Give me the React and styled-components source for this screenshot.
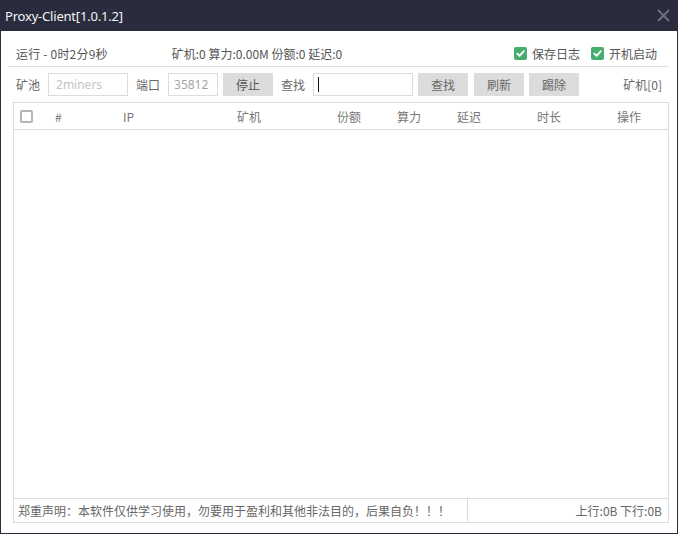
import React from "react";
import styled, { createGlobalStyle } from "styled-components";

const Global = createGlobalStyle`
  html, body { margin: 0; padding: 0; background: #fff; }
  body { font-family: "Noto Sans CJK SC", "Noto Sans", sans-serif; font-size: 12px; }
  * { box-sizing: border-box; }
`;

const Window = styled.div`
  width: 678px;
  height: 534px;
  display: flex;
  flex-direction: column;
  border-left: 1px solid #2a2c3e;
  border-right: 1px solid #2a2c3e;
  border-bottom: 1px solid #2a2c3e;
  background: #fff;
  overflow: hidden;
`;

const TitleBar = styled.div`
  height: 31px;
  flex: none;
  background: #2a2c3e;
  display: flex;
  align-items: center;
  justify-content: space-between;
  padding: 0 8px 0 5px;
  margin: 0 -1px;
`;

const Title = styled.span`
  color: #f4f4f6;
  font-family: "Noto Sans", "Noto Sans CJK SC", sans-serif;
  font-size: 13px;
  letter-spacing: -0.2px;
`;

const Body = styled.div`
  flex: 1;
  display: flex;
  flex-direction: column;
  padding: 0 9px 10px 7px;
`;

const StatusRow = styled.div`
  margin-top: 10px;
  height: 26px;
  display: flex;
  align-items: center;
  padding: 0 11px 1px 8px;
  border-bottom: 1px solid #dcdcdc;
  color: #555;
`;

const Spacer = styled.div`
  flex: 1;
`;

const Stat = styled.span`
  margin-left: ${(p) => p.$ml || 0}px;
  white-space: nowrap;
  letter-spacing: ${(p) => p.$ls || 0}px;
`;

const Check = styled.span`
  display: inline-flex;
  align-items: center;
  gap: 5px;
  margin-left: ${(p) => p.$ml || 0}px;
  color: #555;
`;

const GreenBox = styled.span`
  width: 13px;
  height: 13px;
  border-radius: 2px;
  background: #46ad6f;
  display: inline-flex;
  align-items: center;
  justify-content: center;
`;

const Toolbar = styled.div`
  margin-top: 6px;
  height: 23px;
  display: flex;
  align-items: center;
  padding-left: 8px;
  padding-right: 6px;
  color: #666;
`;

const Label = styled.span`
  margin-left: ${(p) => p.$ml || 0}px;
  margin-right: ${(p) => p.$mr || 0}px;
  white-space: nowrap;
`;

const Field = styled.div`
  width: ${(p) => p.$w}px;
  height: 23px;
  border: 1px solid #dcdcdc;
  display: flex;
  align-items: center;
  padding-left: ${(p) => p.$pl || 7}px;
  color: ${(p) => p.$color || "#555"};
  font-family: "Noto Sans", "Noto Sans CJK SC", sans-serif;
  font-size: 12px;
`;

const Caret = styled.span`
  width: 1px;
  height: 15px;
  background: #111;
`;

const Button = styled.div`
  width: 50px;
  height: 23px;
  margin-left: ${(p) => p.$ml || 0}px;
  background: #dcdcdc;
  color: ${(p) => p.$color || "#666"};
  display: flex;
  align-items: center;
  justify-content: center;
`;

const Table = styled.div`
  margin: 6px 0 0 5px;
  width: 656px;
  flex: 1;
  display: flex;
  flex-direction: column;
  border: 1px solid #dcdcdc;
  border-bottom: none;
`;

const cols = "36px 68px 114px 100px 60px 60px 80px 80px 1fr";

const HeaderRow = styled.div`
  height: 27px;
  display: grid;
  grid-template-columns: ${cols};
  align-items: center;
  border-bottom: 1px solid #dcdcdc;
  color: #777;
`;

const HeadCell = styled.div`
  padding-left: 5px;
  white-space: nowrap;
`;

const GreyBox = styled.span`
  display: block;
  width: 13px;
  height: 13px;
  border: 2px solid #b4b4bc;
  border-radius: 2px;
  margin-left: 1px;
`;

const TableBody = styled.div`
  flex: 1;
`;

const Footer = styled.div`
  margin-left: 5px;
  width: 656px;
  height: 25px;
  display: flex;
  border: 1px solid #dcdcdc;
  color: #666;
`;

const Notice = styled.div`
  width: 454px;
  border-right: 1px solid #dcdcdc;
  padding-left: 4px;
  display: flex;
  align-items: center;
  white-space: nowrap;
`;

const Traffic = styled.div`
  flex: 1;
  display: flex;
  align-items: center;
  justify-content: flex-end;
  padding-right: 6px;
`;

const CheckMark = () => (
  <svg width="9" height="9" viewBox="0 0 9 9">
    <path d="M1.3 4.6 L3.6 6.8 L7.8 2.2" fill="none" stroke="#fff" strokeWidth="1.8" strokeLinecap="round" strokeLinejoin="round" />
  </svg>
);

const CloseIcon = () => (
  <svg width="13" height="13" viewBox="0 0 13 13">
    <path d="M1 1 L12 12 M12 1 L1 12" stroke="#6f7182" strokeWidth="1.8" />
  </svg>
);

const headers = ["#", "IP", "矿机", "份额", "算力", "延迟", "时长", "操作"];

export default function App() {
  return (
    <>
      <Global />
      <Window>
        <TitleBar>
          <Title>Proxy-Client[1.0.1.2]</Title>
          <CloseIcon />
        </TitleBar>
        <Body>
          <StatusRow>
            <Stat $ls={0.2}>运行 - 0时2分9秒</Stat>
            <Stat $ml={64}>矿机:0 算力:0.00M 份额:0 延迟:0</Stat>
            <Spacer />
            <Check>
              <GreenBox><CheckMark /></GreenBox>
              保存日志
            </Check>
            <Check $ml={11}>
              <GreenBox><CheckMark /></GreenBox>
              开机启动
            </Check>
          </StatusRow>
          <Toolbar>
            <Label $mr={8}>矿池</Label>
            <Field $w={80} $color="#c4c4c4">2miners</Field>
            <Label $ml={8} $mr={8}>端口</Label>
            <Field $w={50} $color="#a4a4a4" $pl={5}>35812</Field>
            <Button $ml={5} $color="#555">停止</Button>
            <Label $ml={8} $mr={8}>查找</Label>
            <Field $w={100} $pl={4}><Caret /></Field>
            <Button $ml={5}>查找</Button>
            <Button $ml={6}>刷新</Button>
            <Button $ml={5}>踢除</Button>
            <Spacer />
            <Label>矿机[0]</Label>
          </Toolbar>
          <Table>
            <HeaderRow>
              <HeadCell><GreyBox /></HeadCell>
              {headers.map((h) => (
                <HeadCell key={h}>{h}</HeadCell>
              ))}
            </HeaderRow>
            <TableBody />
          </Table>
          <Footer>
            <Notice>郑重声明：本软件仅供学习使用，勿要用于盈利和其他非法目的，后果自负！！！</Notice>
            <Traffic>上行:0B 下行:0B</Traffic>
          </Footer>
        </Body>
      </Window>
    </>
  );
}
